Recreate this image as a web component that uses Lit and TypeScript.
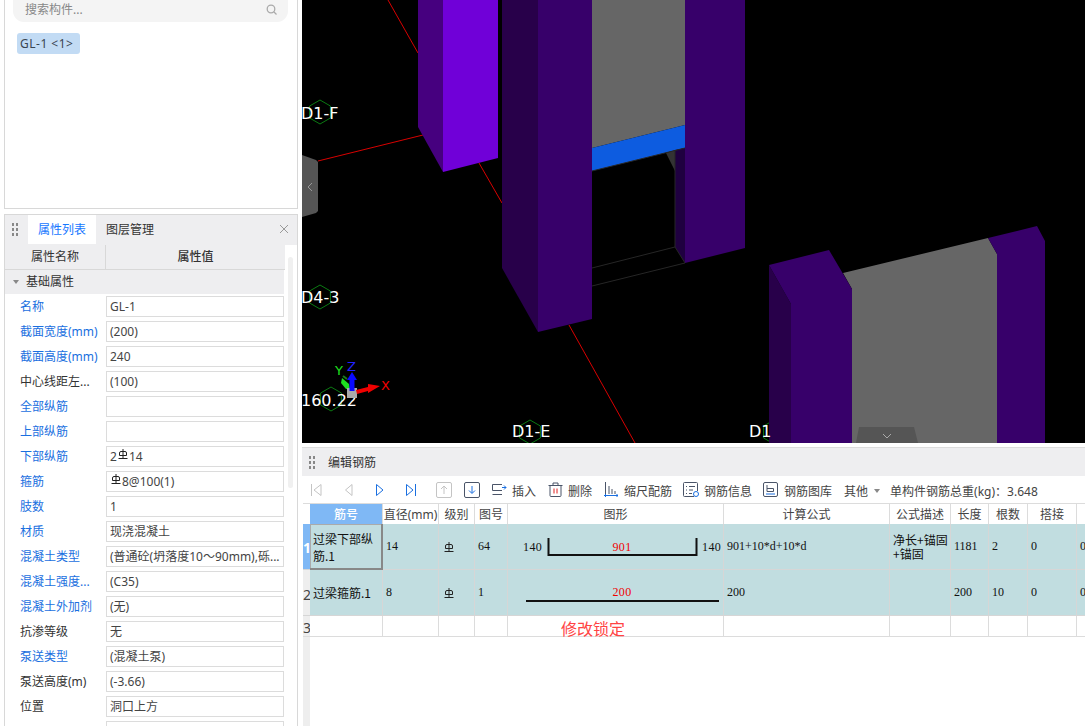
import { css, html, svg, LitElement } from 'lit';
import { customElement } from 'lit/decorators.js';

const props: [string, string, boolean][] = [
  ['名称', 'GL-1', true],
  ['截面宽度(mm)', '(200)', true],
  ['截面高度(mm)', '240', true],
  ['中心线距左...', '(100)', false],
  ['全部纵筋', '', true],
  ['上部纵筋', '', true],
  ['下部纵筋', '2#14', true],
  ['箍筋', '#8@100(1)', true],
  ['肢数', '1', true],
  ['材质', '现浇混凝土', true],
  ['混凝土类型', '(普通砼(坍落度10～90mm),砾...', true],
  ['混凝土强度...', '(C35)', true],
  ['混凝土外加剂', '(无)', true],
  ['抗渗等级', '无', false],
  ['泵送类型', '(混凝土泵)', true],
  ['泵送高度(m)', '(-3.66)', false],
  ['位置', '洞口上方', false],
  ['', '', false],
];

// grade symbol of the rebar, there is no unicode glyph for it
const grade = (size = 10) => html`<svg class="grade" width=${size} height=${size} viewBox="0 0 10 10" fill="none" stroke="#222" stroke-width="1">
  <path d="M1.500 6.500V4a1.500 1.500 0 0 1 1.500-1.500h4A1.500 1.500 0 0 1 8.500 4v2.500zM5 0v9M0.500 9.500h9"/>
</svg>`;

const hex = (cx: number, cy: number) => {
  const r = 12;
  const pts = [0, 60, 120, 180, 240, 300]
    .map((a) => {
      const t = ((a - 90) * Math.PI) / 180;
      return `${(cx + r * Math.cos(t)).toFixed(1)},${(cy + r * Math.sin(t)).toFixed(1)}`;
    })
    .join(' ');
  return svg`<polygon points=${pts} fill="none" stroke="#0b7a12" stroke-width="1"/>`;
};

const gridLabel = (x: number, y: number, t: string) =>
  svg`<text x=${x} y=${y} fill="#fff" font-family="DejaVu Sans, sans-serif" font-size="16">${t}</text>`;

@customElement('app-root')
export class AppRoot extends LitElement {
  static styles = css`
    :host {
      display: grid;
      grid-template-columns: 302px 783px;
      width: 1085px;
      height: 726px;
      overflow: hidden;
      background: #fff;
      font-family: 'Noto Sans', 'Noto Sans CJK SC', sans-serif;
      font-size: 12px;
      color: #333;
    }

    .left {
      display: flex;
      flex-direction: column;
      gap: 5px;
      padding-left: 4px;
      width: 294px;
      height: 726px;
    }

    .search-panel {
      height: 209px;
      box-sizing: border-box;
      border: 1px solid #d8d8d8;
      border-top: none;
      flex: none;
      padding-left: 8px;
    }

    .search {
      display: flex;
      align-items: center;
      justify-content: space-between;
      width: 275px;
      height: 22px;
      padding: 0 11px 3px 12px;
      box-sizing: border-box;
      background: #f4f4f4;
      border-radius: 0 0 11px 11px;
      color: #888;
      line-height: 16px;
    }

    .chip {
      display: inline-block;
      margin: 11px 0 0 4px;
      width: 63px;
      height: 21px;
      line-height: 21px;
      box-sizing: border-box;
      padding-left: 3px;
      background: #c2dbf4;
      border-radius: 3px;
      color: #3a4450;
      white-space: pre;
      letter-spacing: 0.5px;
    }

    .prop-panel {
      flex: 1;
      min-height: 0;
      box-sizing: border-box;
      border: 1px solid #d8d8d8;
      border-bottom: none;
      overflow: hidden;
      position: relative;
    }

    .tabs {
      display: flex;
      align-items: stretch;
      height: 30px;
      padding-bottom: 1px;
      box-sizing: border-box;
      background: #eeeef0;
    }

    .grip {
      width: 8px;
      height: 15px;
      margin: 7px 9px 0 6px;
      background-image: radial-gradient(circle, #888 1.2px, transparent 1.3px);
      background-size: 4px 5px;
      flex: none;
    }

    .tab {
      padding: 0 10px;
      line-height: 29px;
      width: 48px;
      flex: none;
      color: #333;
    }

    .tab.on {
      background: #fff;
      color: #1677ff;
    }

    .close {
      margin: 9px 8px 0 auto;
    }

    .head {
      display: grid;
      grid-template-columns: 101px 179px;
      height: 25px;
      line-height: 24px;
      text-align: center;
      background: #eeeef0;
      box-sizing: border-box;
      border-bottom: 1px solid #d8d8d8;
      width: 280px;
    }

    .head span:first-child {
      border-right: 1px solid #d8d8d8;
    }

    .head span:last-child {
      font-weight: 500;
    }

    .group {
      width: 279px;
      height: 24px;
      line-height: 24px;
      background: #eeeef0;
      display: flex;
      align-items: center;
      gap: 7px;
      padding-left: 8px;
      box-sizing: border-box;
    }

    .caret {
      width: 0;
      height: 0;
      border: 3px solid transparent;
      border-top: 4px solid #888;
      border-bottom: none;
    }

    .rows {
      display: grid;
      grid-auto-rows: 21px;
      row-gap: 4px;
      padding-top: 2px;
    }

    .row {
      display: grid;
      grid-template-columns: 101px 178px;
      align-items: stretch;
    }

    .row label {
      padding-left: 15px;
      line-height: 21px;
      color: #333;
      white-space: nowrap;
    }

    .row label.link {
      color: #1a6fe0;
    }

    .field {
      border: 1px solid #dcdcdc;
      box-sizing: border-box;
      line-height: 19px;
      padding-left: 3px;
      white-space: nowrap;
      overflow: hidden;
      color: #444;
    }

    .field .grade {
      vertical-align: 2px;
      margin: 0 1px;
    }

    .scroll {
      position: absolute;
      top: 42px;
      right: 4px;
      width: 5px;
      height: 231px;
      border-radius: 3px;
      background: #f0f0f0;
    }

    .right {
      display: flex;
      flex-direction: column;
      height: 726px;
      width: 783px;
    }

    .view {
      display: block;
      flex: none;
      width: 783px;
      height: 443px;
    }

    .rebar {
      flex: 1;
      min-height: 0;
      margin-top: 4px;
      border-top: 1px solid #dcdcdc;
      display: flex;
      flex-direction: column;
      overflow: hidden;
    }

    .title {
      display: flex;
      flex: none;
      height: 28px;
      line-height: 30px;
      background: #eeeef0;
    }

    .title .grip {
      margin: 7px 12px 0 6px;
    }

    .toolbar {
      display: flex;
      align-items: center;
      flex: none;
      height: 27px;
      padding-left: 8px;
      color: #444;
      white-space: nowrap;
    }

    .nav {
      display: flex;
      align-items: center;
      width: 31px;
      flex: none;
    }

    .nav.first {
      width: 33px;
    }

    .nav.last {
      width: 31px;
    }

    .box {
      display: flex;
      align-items: center;
      width: 28px;
      flex: none;
    }

    .tool {
      display: flex;
      align-items: center;
      gap: 5px;
      margin-right: 12px;
      padding-top: 2px;
    }

    .tool svg {
      margin-top: -2px;
    }

    .tool.narrow {
      margin-right: 11px;
    }

    .other {
      display: flex;
      align-items: center;
      gap: 6px;
      margin-right: 10px;
      padding-top: 2px;
    }

    .total {
      padding-top: 2px;
    }

    .body {
      flex: 1;
      min-height: 0;
      display: flex;
      flex-direction: column;
      background: linear-gradient(#eee, #eee) 1px 0 / 7px 100% no-repeat;
    }

    table {
      border-collapse: separate;
      border-spacing: 0;
      table-layout: fixed;
      width: 815px;
      margin-left: 1px;
      background: #fff;
    }

    th,
    td {
      box-sizing: border-box;
      border-right: 1px solid #dcdcdc;
      border-bottom: 1px solid #dcdcdc;
      padding: 0;
      font-weight: 400;
      overflow: hidden;
      white-space: nowrap;
    }

    th {
      height: 21px;
      color: #444;
      border-top: 1px solid #dcdcdc;
      border-bottom: none;
    }

    th.sel {
      background: #7fb8f5;
      color: #fff;
      font-weight: 500;
    }

    tr.filled td {
      height: 46px;
      background: #c1dde0;
      border-color: #d6d6d6;
      padding-left: 3px;
      font-family: 'Liberation Serif', 'Noto Sans CJK SC', serif;
      color: #111;
    }

    tr.empty td {
      height: 21px;
      vertical-align: top;
    }

    tr td.num {
      background: #eee;
      padding: 0;
      text-align: center;
      font-size: 14px;
      font-family: 'Noto Sans', sans-serif;
      color: #444;
      border-right: none;
    }

    tr.empty td.num {
      padding-top: 3px;
      line-height: 17px;
    }

    tr.filled td.num.sel {
      background: #7fb8f5;
      color: #fff;
      font-weight: 700;
      padding: 1px 0 0;
    }

    tr.filled td.num {
      padding: 3px 0 0;
      background: #eee;
      font-family: 'Noto Sans', sans-serif;
      color: #444;
    }

    tr.filled td.code {
      white-space: normal;
      line-height: 17px;
      padding: 0 0 0 3px;
      font-family: 'Noto Sans CJK SC', sans-serif;
    }

    tr.filled td.code.cur {
      box-shadow: inset -1px -1px 0 #888, inset 1px 1px 0 #aaa;
      border-color: #888;
    }

    tr.filled td.desc {
      white-space: normal;
      line-height: 14px;
      font-family: 'Noto Sans CJK SC', sans-serif;
      padding-left: 3px;
    }

    tr.filled td.shape {
      padding: 0;
    }

    td.shape svg {
      display: block;
    }

    td .grade {
      display: block;
      margin-left: 2px;
    }

    tr.empty td.lock {
      overflow: visible;
    }

    td .mark {
      display: block;
      box-sizing: border-box;
      padding: 5px 0 0 53px;
      line-height: 16px;
      height: 20px;
      font-size: 16px;
      color: #f44;
    }
  `;

  private renderView() {
    return html`<svg class="view" viewBox="302 0 783 443" xmlns="http://www.w3.org/2000/svg">
      <rect x="302" y="0" width="783" height="443" fill="#000"/>
      <g stroke="#d80000" stroke-width="1" fill="none">
        <path d="M388 0L418 53M318 161L423 135M479 163L502 203M569 325L635 443"/>
      </g>
      <polygon points="302,155 316,160 318,162 318,211 316,213 302,217" fill="#555"/>
      <path d="M312 183l-4 4 4 4" fill="none" stroke="#999"/>

      <polygon points="418,0 443,0 443,172 418,127" fill="#46007f"/>
      <polygon points="443,0 498,0 498,158 443,172" fill="#7000d8"/>

      <polygon points="592,0 685,0 685,125 592,148" fill="#666"/>
      <polygon points="592,148 685,125 685,148 592,171" fill="#0d5ce0"/>
      <polygon points="666,153 675,150 675,171" fill="#333"/>
      <polygon points="675,150 685,148 685,263 675,247" fill="#1f0040"/>
      <path d="M592 268L675 247L685 263L592 286M675 150V247M592 171L685 148" stroke="#262626" fill="none"/>
      <polygon points="502,0 538,0 538,332 502,268" fill="#28004a"/>
      <polygon points="538,0 592,0 592,319 538,332" fill="#37006a"/>
      <polygon points="685,0 745,0 745,248 685,263" fill="#37006a"/>

      ${hex(774, 432)}
      <polygon points="769,265 791,304 791,443 769,443" fill="#28004a"/>
      <polygon points="843,273 988,238 997,254 997,443 852,443 852,289" fill="#666"/>
      <polygon points="769,265 829,250 852,289 852,443 791,443 791,304" fill="#37006a"/>
      <polygon points="988,238 1037,226 1045,241 1045,443 997,443 997,254" fill="#37006a"/>
      <polygon points="859,427 914,427 918,443 856,443" fill="#555"/>
      <path d="M883 434l4 4 4-4" fill="none" stroke="#aaa"/>

      ${hex(320, 112)} ${hex(320, 297)} ${hex(331, 399)} ${hex(530, 432)}
      ${gridLabel(301, 119, 'D1-F')} ${gridLabel(301, 303, 'D4-3')}
      ${gridLabel(301, 406, '160.22')} ${gridLabel(512, 437, 'D1-E')}
      ${gridLabel(749, 437, 'D1')}

      <path d="M342 378l7 6 1 5-4 0-5-6z" fill="#1fe01f"/>
      <path d="M343 376l4 3" stroke="#1a7a1a" stroke-width="2"/>
      <rect x="347" y="388" width="10" height="10" fill="#aaa"/>
      <path d="M349.500 391V380H347L352 372L357 380H354.500V391Z" fill="#0a0aff"/>
      <path d="M356 390L368 387V384L380 386L368 393V391L357 394Z" fill="#f00000"/>
      <text x="335" y="375" fill="#1fe01f" font-family="DejaVu Sans, sans-serif" font-size="13">Y</text>
      <text x="347" y="371" fill="#2222ff" font-family="DejaVu Sans, sans-serif" font-size="13">Z</text>
      <text x="381" y="390" fill="#f00000" font-family="DejaVu Sans, sans-serif" font-size="13">X</text>
    </svg>`;
  }

  private renderToolbar() {
    const off = '#c4c4c4';
    const on = '#1a6fe0';
    const dark = '#4a5468';
    return html`<div class="toolbar">
      <span class="nav first"><svg width="12" height="14" fill="none" stroke=${off}><path d="M1.500 1v12M11 1.500L4 7l7 5.500z"/></svg></span>
      <span class="nav"><svg width="12" height="14" fill="none" stroke=${off}><path d="M9 1.500L2.500 7 9 12.500z"/></svg></span>
      <span class="nav"><svg width="12" height="14" fill="none" stroke=${on}><path d="M2.500 1.500L9 7l-6.500 5.500z"/></svg></span>
      <span class="nav last"><svg width="12" height="14" fill="none" stroke=${on}><path d="M1.500 1.500L8 7l-6.500 5.500zM10.500 1v12"/></svg></span>
      <span class="box"><svg width="16" height="16" fill="none" stroke=${off}><rect x="0.500" y="0.500" width="15" height="15" rx="1.500"/><path d="M8 12V5M5 7l3-3 3 3"/></svg></span>
      <span class="box"><svg width="16" height="16" fill="none"><rect x="0.500" y="0.500" width="15" height="15" rx="1.500" stroke=${dark}/><path d="M8 4v7M5 8.500l3 3 3-3" stroke=${on}/></svg></span>
      <span class="tool"><svg width="15" height="13" fill="none" stroke=${dark}><path d="M10 1.500H.5v6h9.500M.5 11.500h9.500"/><path d="M10 4.500h4M12 2.500l2 2-2 2" stroke=${on}/></svg>插入</span>
      <span class="tool"><svg width="15" height="15" fill="none" stroke=${dark}><path d="M0.500 3.500h14M5 3V1h5v2M2 3.500v10a1 1 0 0 0 1 1h9a1 1 0 0 0 1-1v-10"/><path d="M6 6.500v5M9 6.500v5" stroke="#e02020"/></svg>删除</span>
      <span class="tool narrow"><svg width="15" height="15" fill="none" stroke=${dark}><path d="M1.500 0v12M5 4v8M8 7v5M11 9v3"/><path d="M0 13.500h14M1.500 12v3M13 12v3" stroke=${on}/></svg>缩尺配筋</span>
      <span class="tool narrow"><svg width="16" height="15" fill="none" stroke=${dark}><path d="M11 14.500H1.500a1 1 0 0 1-1-1v-12a1 1 0 0 1 1-1h12a1 1 0 0 1 1 1V9M3 4.500h1M6 4.500h6M3 8h1M6 8h4M3 11.500h1M6 11.500h3"/><circle cx="13" cy="12" r="2.500" stroke=${on}/></svg>钢筋信息</span>
      <span class="tool"><svg width="16" height="15" fill="none" stroke=${dark}><rect x="0.500" y="0.500" width="14" height="14" rx="1.500"/><path d="M4 3v6.500h6.500V6.500H4"/><path d="M3 12h9" stroke=${on}/></svg>钢筋图库</span>
      <span class="other">其他<i class="caret"></i></span>
      <span class="total">单构件钢筋总重(kg)：3.648</span>
    </div>`;
  }

  private renderTable() {
    return html`<table>
      <colgroup>
        ${[7, 73, 56, 36, 33, 216, 166, 61, 38, 39, 49, 41].map((w) => html`<col style="width:${w}px" />`)}
      </colgroup>
      <tr>
        <th style="background:#fff;border-right:none"></th>
        <th class="sel">筋号</th>
        <th>直径(mm)</th><th>级别</th><th>图号</th><th>图形</th><th>计算公式</th>
        <th>公式描述</th><th>长度</th><th>根数</th><th>搭接</th><th></th>
      </tr>
      <tr class="filled">
        <td class="num sel">1</td>
        <td class="code cur">过梁下部纵筋.1</td>
        <td>14</td><td>${grade()}</td><td>64</td>
        <td class="shape">
          <svg width="215" height="45" font-family="Liberation Serif, serif" font-size="12">
            <text x="15" y="26.500" fill="#111" letter-spacing="0.400">140</text>
            <path d="M40.500 14V31H188.500V14" fill="none" stroke="#111" stroke-width="2"/>
            <text x="114" y="26.500" fill="#f00000" text-anchor="middle" letter-spacing="0.400">901</text>
            <text x="194" y="26.500" fill="#111" letter-spacing="0.400">140</text>
          </svg>
        </td>
        <td>901+10*d+10*d</td>
        <td class="desc">净长+锚固<br />+锚固</td>
        <td>1181</td><td>2</td><td>0</td><td>0</td>
      </tr>
      <tr class="filled">
        <td class="num">2</td>
        <td class="code">过梁箍筋.1</td>
        <td>8</td><td>${grade()}</td><td>1</td>
        <td class="shape">
          <svg width="215" height="45" font-family="Liberation Serif, serif" font-size="12">
            <text x="114" y="26" fill="#f00000" text-anchor="middle" letter-spacing="0.400">200</text>
            <path d="M18 31H211" fill="none" stroke="#111" stroke-width="2"/>
          </svg>
        </td>
        <td>200</td><td></td><td>200</td><td>10</td><td>0</td><td>0</td>
      </tr>
      <tr class="empty">
        <td class="num">3</td><td></td><td></td><td></td><td></td>
        <td class="lock"><span class="mark">修改锁定</span></td>
        <td></td><td></td><td></td><td></td><td></td><td></td>
      </tr>
    </table>`;
  }

  render() {
    return html`
      <div class="left">
        <div class="search-panel">
          <div class="search">
            <span>搜索构件...</span>
            <svg width="11" height="11" fill="none" stroke="#aaa" stroke-width="1.300"><circle cx="5" cy="5" r="3.800"/><path d="M8 8l2.500 2.500"/></svg>
          </div>
          <span class="chip">GL-1 &lt;1&gt;</span>
        </div>
        <div class="prop-panel">
          <div class="tabs">
            <i class="grip"></i>
            <span class="tab on">属性列表</span>
            <span class="tab">图层管理</span>
            <svg class="close" width="10" height="10" stroke="#999" fill="none"><path d="M1 1l8 8M9 1l-8 8"/></svg>
          </div>
          <div class="head"><span>属性名称</span><span>属性值</span></div>
          <div class="group"><i class="caret"></i>基础属性</div>
          <div class="rows">
            ${props.map(
              ([k, v, link]) => html`<div class="row">
                <label class=${link ? 'link' : ''}>${k}</label>
                <div class="field">${v.includes('#')
                  ? html`${v.split('#')[0]}${grade(10)}${v.split('#')[1]}`
                  : v}</div>
              </div>`,
            )}
          </div>
          <div class="scroll"></div>
        </div>
      </div>
      <div class="right">
        ${this.renderView()}
        <div class="rebar">
          <div class="title"><i class="grip"></i>编辑钢筋</div>
          ${this.renderToolbar()}
          <div class="body">${this.renderTable()}</div>
        </div>
      </div>
    `;
  }
}
